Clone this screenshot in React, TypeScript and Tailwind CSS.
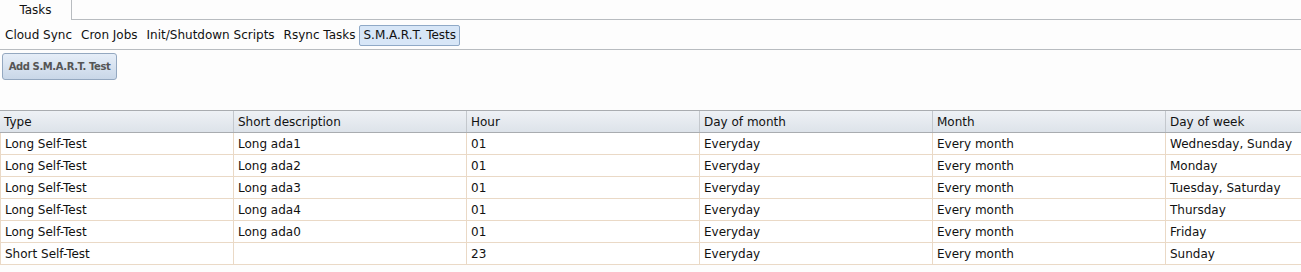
import React from "react";

const cols = ["Type", "Short description", "Hour", "Day of month", "Month", "Day of week"];
const rows = [
  ["Long Self-Test", "Long ada1", "01", "Everyday", "Every month", "Wednesday, Sunday"],
  ["Long Self-Test", "Long ada2", "01", "Everyday", "Every month", "Monday"],
  ["Long Self-Test", "Long ada3", "01", "Everyday", "Every month", "Tuesday, Saturday"],
  ["Long Self-Test", "Long ada4", "01", "Everyday", "Every month", "Thursday"],
  ["Long Self-Test", "Long ada0", "01", "Everyday", "Every month", "Friday"],
  ["Short Self-Test", "", "23", "Everyday", "Every month", "Sunday"],
];

export default function App() {
  return (
    <div className="w-[1301px] h-[272px] overflow-hidden bg-[#fdfdfd] text-[12px] text-[#111]" style={{ fontFamily: '"DejaVu Sans", Verdana, sans-serif' }}>
      <div className="flex h-[20px] border-b border-[#b8bcc0]">
        <div className="w-[72px] h-[20px] -mb-px bg-[#fdfdfd] border-r border-[#b8bcc0] flex items-center justify-center">Tasks</div>
      </div>
      <div className="flex items-center h-[30px] border-b border-[#b8bcc0] pl-[5px] gap-[9px] pt-[1px]">
        <span>Cloud Sync</span>
        <span>Cron Jobs</span>
        <span>Init/Shutdown Scripts</span>
        <span>Rsync Tasks</span>
        <span className="-ml-[5px] px-[3px] h-[21px] flex items-center bg-[#d7e6f7] border border-[#8fa9c7] rounded-[2px]">S.M.A.R.T. Tests</span>
      </div>
      <div className="pt-[3px] pl-[2px]">
        <button className="h-[27px] w-[115px] rounded-[3px] border border-[#94a8c0] bg-gradient-to-b from-[#e6eef8] to-[#c9d7e8] text-[#555] font-bold text-[10px] tracking-[-0.4px]">Add S.M.A.R.T. Test</button>
      </div>
      <div className="mt-[30px]">
        <div className="flex h-[23px] border-t border-b border-[#a9acb0] bg-gradient-to-b from-[#eef1f5] to-[#dde3ea]">
          {cols.map((c, i) => (
            <div key={i} className="w-[233px] shrink-0 border-l border-[#c4c8cd] first:border-l-0 pl-[4px] flex items-center">{c}</div>
          ))}
        </div>
        {rows.map((r, ri) => (
          <div key={ri} className="flex h-[22px] border-b border-[#ead9c6] bg-white">
            {r.map((c, i) => (
              <div key={i} className="w-[233px] shrink-0 border-l border-[#ead9c6] pl-[4px] pt-[1px] flex items-center">{c}</div>
            ))}
          </div>
        ))}
      </div>
    </div>
  );
}
